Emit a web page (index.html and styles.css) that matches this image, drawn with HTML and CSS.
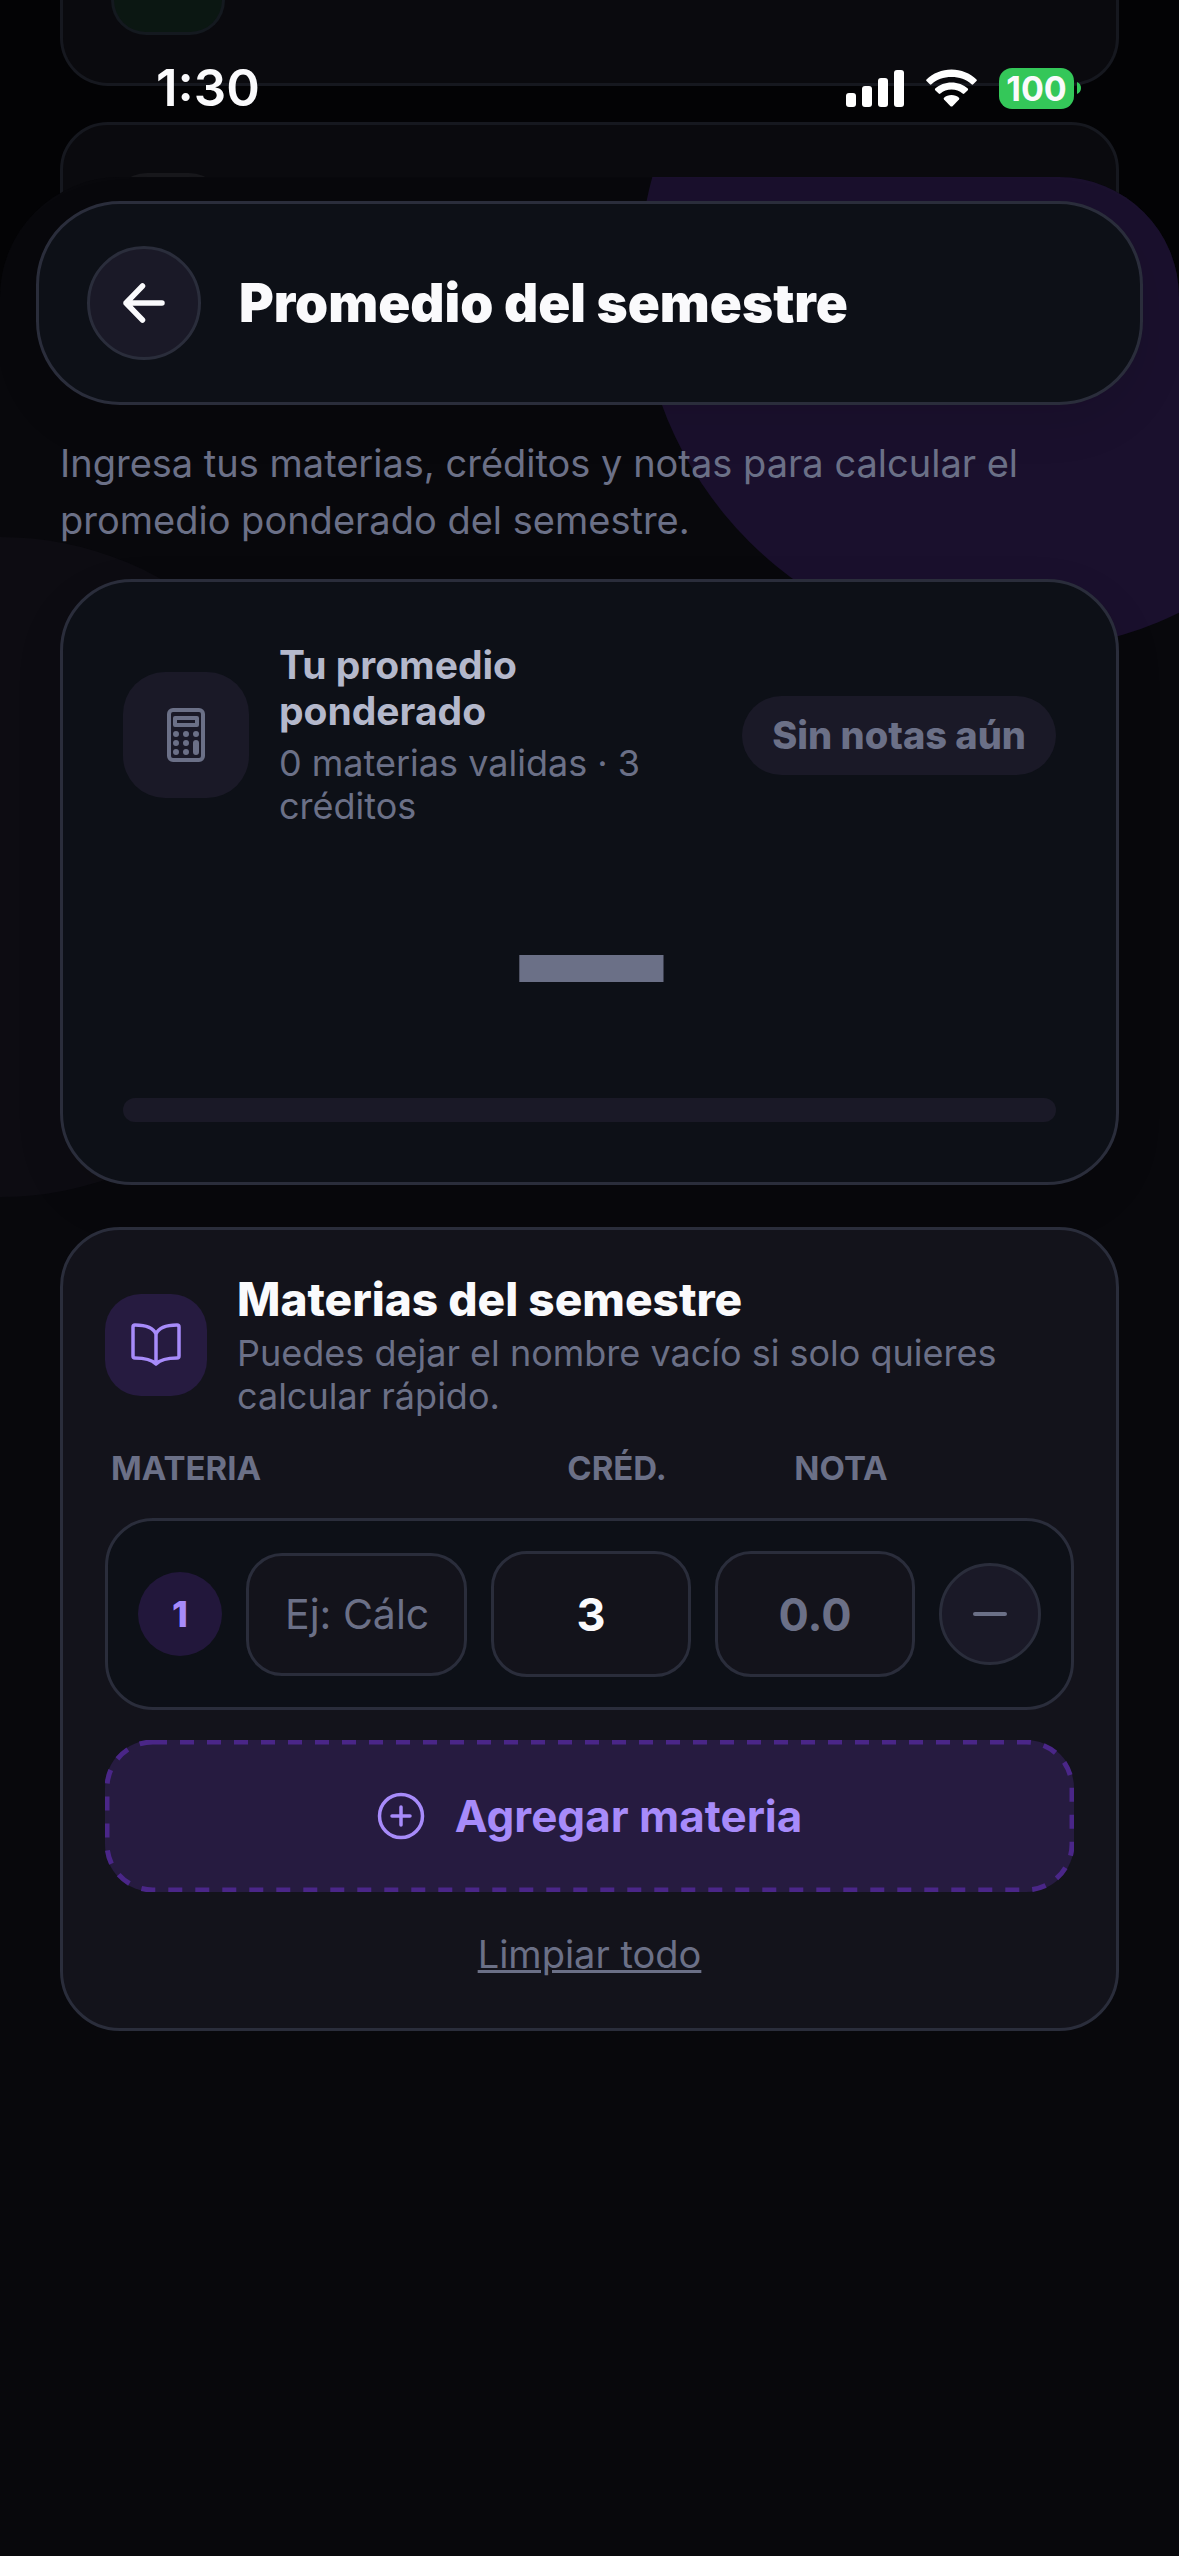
FILE: index.html
```html
<!DOCTYPE html>
<html lang="es">
<head>
    <meta charset="UTF-8">
    <meta name="viewport" content="width=device-width, initial-scale=1.0">
    <title>Promedio del semestre</title>
    <link rel="stylesheet" href="styles.css">
</head>
<body>

    <!-- Status bar -->
    <div class="status-bar">
        <span class="time">1:30</span>
        <div class="status-icons">
            <svg width="58" height="38" viewBox="0 0 58 38" fill="#fff" aria-hidden="true">
                <rect x="0" y="24" width="10" height="14" rx="3"/>
                <rect x="16" y="17" width="10" height="21" rx="3"/>
                <rect x="32" y="9" width="10" height="29" rx="3"/>
                <rect x="48" y="1" width="10" height="37" rx="3"/>
            </svg>
            <svg width="51" height="38" viewBox="0 0 51 38" fill="#fff" aria-hidden="true">
                <path d="M25.500 .5C35.200 .5 44 4.200 50.500 10.500Q51.300 11.300 50.500 12L47.200 15.300Q46.400 16 45.500 15.200C40.300 10.500 33.300 8 25.500 8S10.700 10.500 5.500 15.200Q4.600 16 3.800 15.300L.5 12Q-.3 11.300 .5 10.500C7 4.200 15.800 .5 25.500 .5Z"/>
                <path d="M25.500 13.500C31.800 13.500 37.500 15.800 41.800 19.600Q42.500 20.300 41.800 21.200L38.300 24.600Q37.500 25.300 36.600 24.600C33.600 22 29.800 20.600 25.500 20.600S17.400 22 14.400 24.600Q13.500 25.300 12.700 24.600L9.200 21.200Q8.500 20.300 9.200 19.600C13.500 15.800 19.200 13.500 25.500 13.500Z"/>
                <path d="M25.500 26C28.400 26 31.100 27 33 28.700Q33.700 29.600 33 30.400L26.500 37.200Q25.500 38 24.500 37.200L18 30.400Q17.300 29.600 18 28.700C19.900 27 22.600 26 25.500 26Z"/>
            </svg>
            <div class="battery">
                <span class="battery-level">100</span>
                <svg width="4" height="12" viewBox="0 0 4 12" fill="#34c759" aria-hidden="true"><path d="M0 0C2.500 1 4 3.300 4 6S2.500 11 0 12Z"/></svg>
            </div>
        </div>
    </div>

    <!-- Dimmed screen behind the sheet -->
    <div class="backdrop">
        <div class="back-card back-card-first"><div class="back-icon green"></div></div>
        <div class="back-card back-card-second"><div class="back-icon gray"></div></div>
    </div>

    <!-- Sheet -->
    <main class="sheet">
        <div class="blob blob-purple"></div>
        <div class="blob blob-gray"></div>

        <header class="header">
            <button class="back-button" type="button" aria-label="Volver">
                <svg width="48" height="48" viewBox="0 0 48 48" fill="none" stroke="#fafafc" stroke-width="5.500" stroke-linecap="round" stroke-linejoin="round" aria-hidden="true"><path d="M22.500 7L6 24L22.500 41M6 24H42"/></svg>
            </button>
            <h1>Promedio del semestre</h1>
        </header>

        <div class="content">
            <p class="intro">Ingresa tus materias, créditos y notas para calcular el promedio ponderado del semestre.</p>

            <section class="card result-card">
                <div class="result-head">
                    <div class="result-icon">
                        <svg width="38" height="54" viewBox="0 0 38 54" fill="none" stroke="#6b7087" stroke-width="4" aria-hidden="true">
                            <rect x="2" y="2" width="34" height="50" rx="4"/>
                            <rect x="8" y="10" width="22" height="7" stroke-linejoin="round"/>
                            <g stroke-width="6" stroke-linecap="round">
                                <path d="M9 26h0M19 26h0M29 26h0M9 35h0M19 35h0M9 44h0M19 44h0M29 35v9"/>
                            </g>
                        </svg>
                    </div>
                    <div class="result-text">
                        <h2>Tu promedio ponderado</h2>
                        <p>0 materias validas · 3 créditos</p>
                    </div>
                    <span class="badge">Sin notas aún</span>
                </div>
                <div class="average">—</div>
                <div class="progress"></div>
            </section>

            <section class="card subjects-card">
                <div class="subjects-head">
                    <div class="subjects-icon">
                        <svg width="50" height="46" viewBox="0 0 50 46" fill="none" stroke="#a78bfa" stroke-width="3.500" stroke-linecap="round" stroke-linejoin="round" aria-hidden="true"><path d="M25 12C22 5 13 3 4 3Q2 3 2 5V34Q2 36 4 36C13 36 20 37 25 42C30 37 37 36 46 36Q48 36 48 34V5Q48 3 46 3C37 3 28 5 25 12V41"/></svg>
                    </div>
                    <div class="subjects-text">
                        <h2>Materias del semestre</h2>
                        <p>Puedes dejar el nombre vacío si solo quieres calcular rápido.</p>
                    </div>
                </div>

                <div class="columns">
                    <label class="col-name" for="materia">MATERIA</label>
                    <label class="col-number" for="creditos">CRÉD.</label>
                    <label class="col-number" for="nota">NOTA</label>
                </div>

                <div class="subject-row">
                    <span class="index">1</span>
                    <input class="name-input" id="materia" type="text" placeholder="Ej: Cálc">
                    <input class="number-input" id="creditos" type="text" inputmode="numeric" value="3">
                    <input class="number-input" id="nota" type="text" inputmode="decimal" placeholder="0.0">
                    <button class="remove-button" type="button" aria-label="Quitar materia">
                        <svg width="34" height="4" viewBox="0 0 34 4" aria-hidden="true"><rect width="34" height="4" rx="2" fill="#6b7087"/></svg>
                    </button>
                </div>

                <button class="add-button" type="button">
                    <svg class="dashes" aria-hidden="true"><rect x="2" y="2" rx="46"/></svg>
                    <svg width="48" height="48" viewBox="0 0 48 48" fill="none" stroke="#a78bfa" stroke-width="3.500" stroke-linecap="round" aria-hidden="true"><circle cx="24" cy="24" r="21.500"/><path d="M24 15V33M15 24H33"/></svg>
                    Agregar materia
                </button>
                <button class="clear-button" type="button">Limpiar todo</button>
            </section>
        </div>
    </main>

</body>
</html>
```
FILE: styles.css
```css
* {
    box-sizing: border-box;
}
body {
    margin: 0;
    min-height: 100vh;
    display: flex;
    flex-direction: column;
    position: relative;
    background-color: #030305;
    color: #fafafc;
    font-family: Inter, "Liberation Sans", sans-serif;
}
h1, h2, p {
    margin: 0;
}
button, input {
    font-family: inherit;
    margin: 0;
}
button {
    cursor: pointer;
}
svg {
    flex-shrink: 0;
}

/* Status bar */
.status-bar {
    position: absolute;
    top: 0;
    left: 0;
    right: 0;
    z-index: 2;
    display: flex;
    justify-content: space-between;
    align-items: center;
    padding: 57px 98px 0 156px;
}
.time {
    font-size: 51px;
    font-weight: 600;
    line-height: 62px;
}
.status-icons {
    display: flex;
    align-items: center;
    gap: 22px;
}
.battery {
    display: flex;
    align-items: center;
    gap: 3px;
}
.battery-level {
    width: 75px;
    border-radius: 13px;
    background-color: #34c759;
    font-size: 34px;
    font-weight: 700;
    line-height: 41px;
    text-align: center;
}

/* Screen behind */
.backdrop {
    height: 240px;
    padding: 0 60px;
    overflow: hidden;
}
.back-card {
    border: 3px solid #16181f;
    background-color: #0a0a0e;
    padding: 0 48px;
}
.back-card-first {
    height: 86px;
    border-top: none;
    border-radius: 0 0 48px 48px;
}
.back-card-second {
    height: 200px;
    margin-top: 36px;
    padding-top: 48px;
    border-radius: 48px 48px 0 0;
}
.back-icon {
    width: 114px;
    border: 3px solid #14191f;
}
.green {
    height: 35px;
    border-top: none;
    border-radius: 0 0 36px 36px;
    background-color: #0b1712;
}
.gray {
    height: 114px;
    border-radius: 36px;
    border-color: #17171b;
    background-color: #17171b;
}

/* Sheet */
.sheet {
    flex: 1;
    position: relative;
    margin-top: -63px;
    padding-top: 24px;
    overflow: hidden;
    border-radius: 120px 120px 0 0;
    background-color: #08080c;
}
.blob {
    position: absolute;
    border-radius: 50%;
}
.blob-purple {
    width: 750px;
    height: 750px;
    top: -276px;
    right: -210px;
    background-color: #1a102d;
}
.blob-gray {
    width: 660px;
    height: 660px;
    top: 360px;
    left: -330px;
    background-color: #0d0c12;
}
.header {
    position: relative;
    display: flex;
    align-items: center;
    gap: 38px;
    margin: 0 36px;
    padding: 42px 48px;
    border: 3px solid #2a2d3b;
    border-radius: 84px;
    background-color: #0d1017;
    box-shadow: 0 18px 48px rgba(0, 0, 0, 0.1);
}
.back-button {
    width: 114px;
    height: 114px;
    display: flex;
    justify-content: center;
    align-items: center;
    padding: 0;
    border: 3px solid #2a2d3b;
    border-radius: 50%;
    background-color: #1a1927;
}
h1 {
    font-size: 53px;
    font-weight: 900;
    line-height: 66px;
}
.content {
    position: relative;
    display: flex;
    flex-direction: column;
    padding: 30px 60px;
}
.intro {
    color: #6b7087;
    font-size: 38px;
    line-height: 57px;
}
.card {
    border: 3px solid #2a2d3b;
    border-radius: 72px;
}

/* Result card */
.result-card {
    margin-top: 30px;
    padding: 60px;
    background-color: #0d1017;
    box-shadow: 0 18px 48px rgba(0, 0, 0, 0.1);
}
.result-head {
    display: flex;
    align-items: center;
    gap: 30px;
}
.result-icon {
    width: 126px;
    height: 126px;
    flex-shrink: 0;
    display: flex;
    justify-content: center;
    align-items: center;
    border-radius: 42px;
    background-color: #1a1927;
}
.result-text {
    flex: 1;
}
.result-text h2 {
    margin-bottom: 8px;
    color: #b4b8cb;
    font-size: 39px;
    font-weight: 700;
    line-height: 46px;
}
.result-text p {
    color: #6b7087;
    font-size: 36px;
    line-height: 43px;
}
.badge {
    padding: 18px 30px;
    border-radius: 42px;
    background-color: #1a1927;
    color: #6b7087;
    font-size: 38px;
    font-weight: 800;
    line-height: 43px;
    white-space: nowrap;
}
.average {
    padding-top: 12px;
    color: #6b7087;
    font-family: Roboto, sans-serif;
    font-size: 210px;
    font-weight: 900;
    line-height: 258px;
    text-align: center;
}
.progress {
    height: 24px;
    border-radius: 12px;
    background-color: #1a1927;
}

/* Subjects card */
.subjects-card {
    display: flex;
    flex-direction: column;
    margin-top: 42px;
    padding: 42px;
    border-radius: 60px;
    background-color: #13131b;
}
.subjects-head {
    display: flex;
    align-items: center;
    gap: 30px;
}
.subjects-icon {
    width: 102px;
    height: 102px;
    flex-shrink: 0;
    display: flex;
    justify-content: center;
    align-items: center;
    border-radius: 36px;
    background-color: #261b40;
}
.subjects-text h2 {
    margin-bottom: 6px;
    font-size: 46px;
    font-weight: 800;
    line-height: 54px;
}
.subjects-text p {
    color: #6b7087;
    font-size: 36px;
    line-height: 43px;
}
.columns {
    display: flex;
    gap: 24px;
    margin-top: 30px;
    padding: 0 133px 0 6px;
    color: #6b7087;
    font-size: 33px;
    font-weight: 700;
    line-height: 40px;
}
.col-name {
    flex: 1;
}
.col-number {
    width: 200px;
    text-align: center;
}
.subject-row {
    display: flex;
    align-items: center;
    gap: 24px;
    margin-top: 30px;
    padding: 30px;
    border: 3px solid #2a2d3b;
    border-radius: 48px;
    background-color: #0d1017;
}
.index {
    width: 84px;
    flex-shrink: 0;
    border-radius: 50%;
    background-color: #22173b;
    color: #a78bfa;
    font-size: 36px;
    font-weight: 800;
    line-height: 84px;
    text-align: center;
}
.name-input, .number-input {
    min-width: 0;
    border: 3px solid #2a2d3b;
    border-radius: 36px;
    background-color: #13131b;
    color: #fafafc;
    outline: none;
}
.name-input {
    flex: 1;
    height: 123px;
    padding: 0 30px 0 36px;
    font-size: 41px;
}
.number-input {
    width: 200px;
    height: 126px;
    padding: 0 24px;
    font-size: 45px;
    font-weight: 700;
    text-align: center;
}
.name-input::placeholder, .number-input::placeholder {
    color: #6b7087;
}
.remove-button {
    width: 102px;
    height: 102px;
    flex-shrink: 0;
    display: flex;
    justify-content: center;
    align-items: center;
    padding: 0;
    border: 3px solid #2a2d3b;
    border-radius: 50%;
    background-color: #1a1927;
}
.add-button {
    position: relative;
    display: flex;
    justify-content: center;
    align-items: center;
    gap: 30px;
    height: 152px;
    margin-top: 30px;
    border: none;
    border-radius: 48px;
    background-color: #261b40;
    color: #a78bfa;
    font-size: 44px;
    font-weight: 700;
}
.dashes {
    position: absolute;
    top: 0;
    left: 0;
    width: 100%;
    height: 100%;
}
.dashes rect {
    width: calc(100% - 4px);
    height: calc(100% - 4px);
    fill: none;
    stroke: #4a2688;
    stroke-width: 5px;
    stroke-dasharray: 14 13;
}
.clear-button {
    align-self: center;
    margin-top: 30px;
    padding: 6px 12px;
    border: none;
    background: none;
    color: #6b7087;
    font-size: 38px;
    line-height: 52px;
    text-decoration: underline;
}
```
